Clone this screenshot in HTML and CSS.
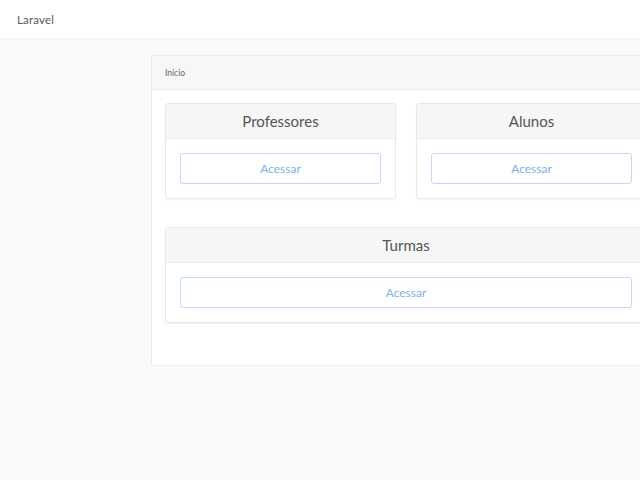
FILE: index.html
```html
<!DOCTYPE html>
<html>
<head>
<meta charset="utf-8">
<title>Laravel</title>
<link rel="stylesheet" href="styles.css">
</head>
<body>
<nav class="navbar"><span class="brand">Laravel</span></nav>
<main class="main">
  <div class="panel">
    <div class="panel-header">Início</div>
    <div class="panel-body">
      <div class="grid">
        <div class="card">
          <div class="card-header">Professores</div>
          <div class="card-body"><button class="btn">Acessar</button></div>
        </div>
        <div class="card">
          <div class="card-header">Alunos</div>
          <div class="card-body"><button class="btn">Acessar</button></div>
        </div>
        <div class="card wide">
          <div class="card-header">Turmas</div>
          <div class="card-body"><button class="btn">Acessar</button></div>
        </div>
      </div>
    </div>
  </div>
</main>
</body>
</html>
```
FILE: styles.css
```css
html, body {
  margin: 0;
  padding: 0;
  overflow: hidden;
}
body {
  background: #f8fafc;
  font-family: Lato, "Open Sans", sans-serif;
  color: #4a4a4a;
  width: 640px;
  height: 480px;
}
.navbar {
  height: 38px;
  background: #fff;
  box-shadow: 0 1px 3px rgba(0, 0, 0, 0.05);
  display: flex;
  align-items: center;
  padding-left: 17px;
}
.brand {
  font-size: 11.5px;
  color: #5a5a5a;
  letter-spacing: 0.2px;
}
.main {
  padding: 17px 0 0 151px;
}
.panel {
  width: 508px;
  background: #fff;
  border: 1px solid #ebebeb;
  border-radius: 3px;
}
.panel-header {
  height: 33px;
  background: #f7f7f7;
  border-bottom: 1px solid #ebebeb;
  padding: 0 13px;
  display: flex;
  align-items: center;
  font-size: 8.5px;
  color: #666;
}
.panel-body {
  padding: 13px 13px 42px 13px;
}
.grid {
  display: grid;
  grid-template-columns: 231px 231px;
  column-gap: 20px;
  row-gap: 28px;
}
.card {
  background: #fff;
  border: 1px solid #e9e9e9;
  border-radius: 3px;
  box-shadow: 0 1px 2px rgba(0, 0, 0, 0.05);
  overflow: hidden;
}
.card.wide {
  grid-column: 1 / 3;
}
.card-header {
  height: 35px;
  background: #f6f6f6;
  border-bottom: 1px solid #ebebeb;
  display: flex;
  align-items: center;
  justify-content: center;
  font-size: 15px;
  color: #555;
  padding-bottom: 1px;
  box-sizing: border-box;
}
.card-body {
  padding: 14px;
}
.btn {
  display: block;
  width: 100%;
  height: 31px;
  background: #fff;
  border: 1px solid #c3d8f5;
  border-radius: 3px;
  color: #80b0ec;
  font-family: Lato, "Open Sans", sans-serif;
  font-size: 12px;
  padding: 0;
}
```
